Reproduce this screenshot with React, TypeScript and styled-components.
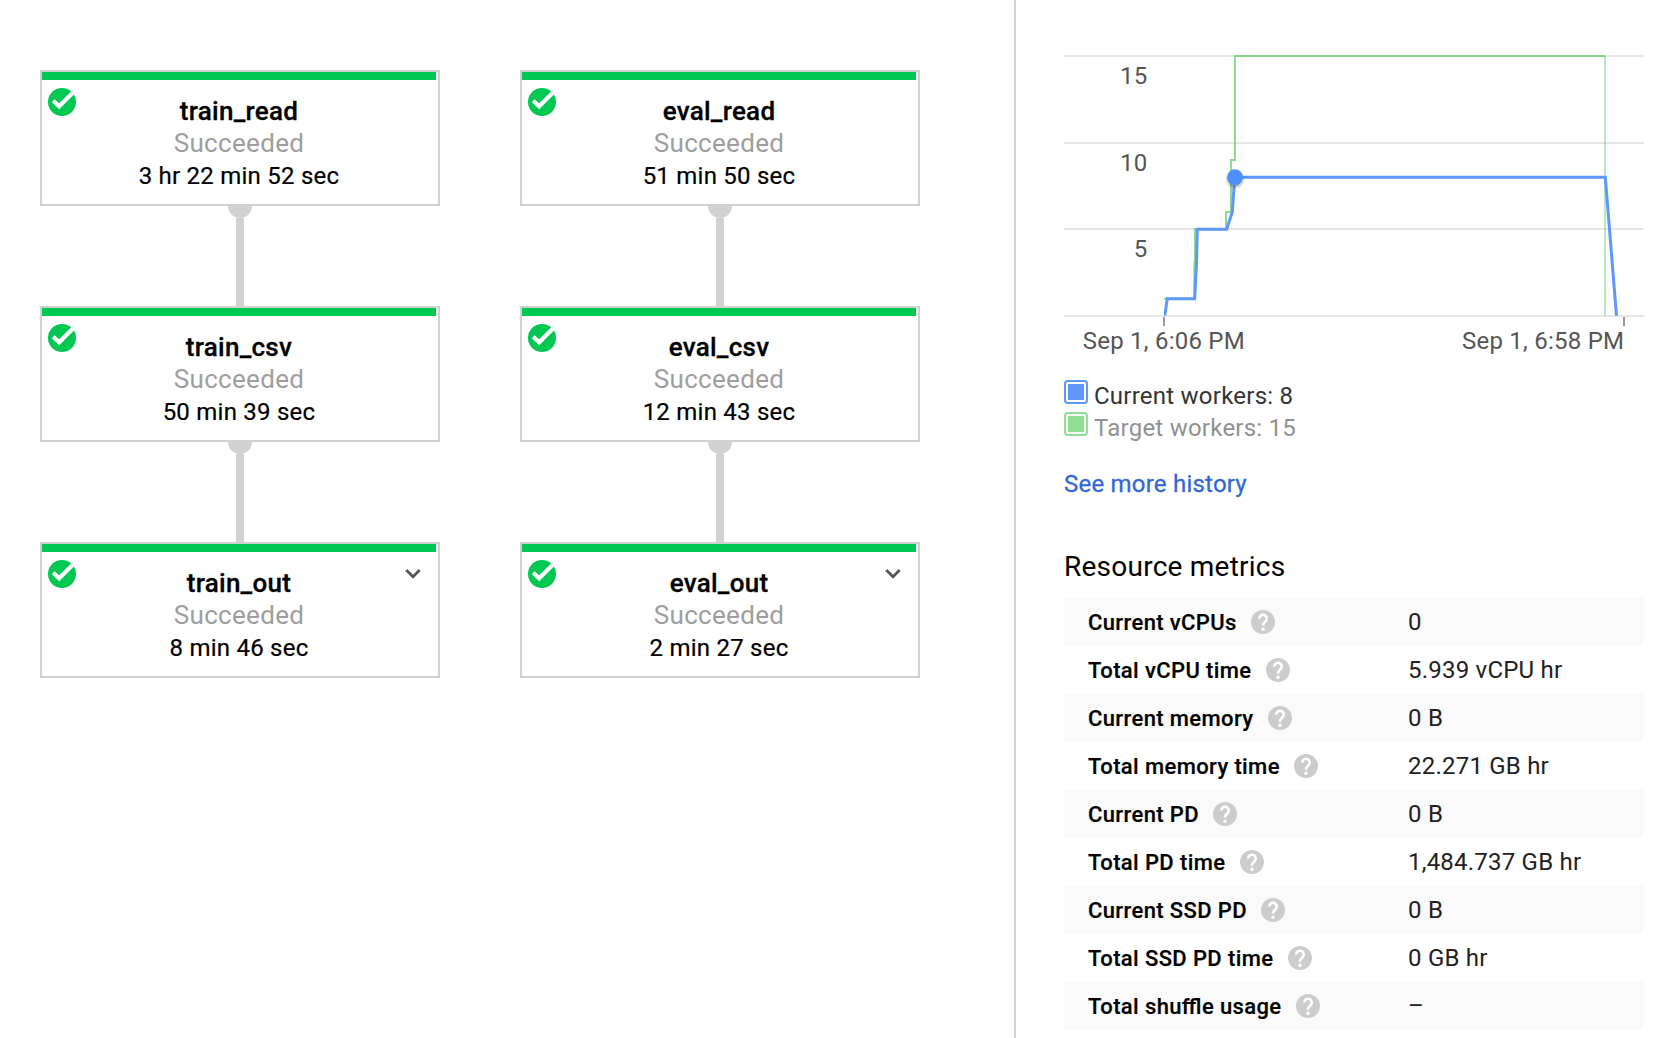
import React from 'react';
import styled, { createGlobalStyle } from 'styled-components';

const GlobalStyle = createGlobalStyle`
  * { box-sizing: border-box; }
  body {
    margin: 0;
    background: #fff;
    color: #000;
    font-family: Roboto, "Liberation Sans", sans-serif;
    overflow: hidden;
  }
`;

const Page = styled.main`
  display: grid;
  grid-template-columns: 1014px 1fr;
  height: 1038px;
  overflow: hidden;
`;

const Graph = styled.section`
  display: flex;
  align-items: flex-start;
  gap: 80px;
  padding: 70px 0 0 40px;
`;

const Pipeline = styled.div`
  display: flex;
  flex-direction: column;
  align-items: center;
  width: 400px;
`;

const Card = styled.article`
  width: 100%;
  height: 136px;
  border: 2px solid #d1d1d1;
  padding-right: 2px;
  background: #fff;
`;

const StatusBar = styled.div`
  height: 8px;
  background: #00c853;
`;

const CardBody = styled.div`
  display: grid;
  grid-template-columns: 1fr auto 1fr;
  align-items: start;
`;

const StatusIcon = styled.svg`
  width: 28px;
  height: 28px;
  margin: 8px 0 0 6px;
`;

const Chevron = styled.svg`
  justify-self: end;
  width: 18px;
  height: 12px;
  margin: 16px 14px 0 0;
`;

const CardText = styled.div`
  padding-top: 15px;
  text-align: center;
  white-space: nowrap;
`;

const StepName = styled.h3`
  margin: 0;
  font-size: 26px;
  line-height: 32px;
  font-weight: 500;
  letter-spacing: 0.26px;
  -webkit-text-stroke: 0.3px #000;
`;

const StepStatus = styled.div`
  font-size: 26px;
  line-height: 32px;
  letter-spacing: 0.32px;
  color: #9e9e9e;
`;

const StepTime = styled.div`
  font-size: 24px;
  line-height: 34px;
  letter-spacing: 0.24px;
  -webkit-text-stroke: 0.2px #000;
`;

const Connector = styled.div`
  display: flex;
  flex-direction: column;
  align-items: center;
  width: 24px;
  height: 100px;
`;

const Socket = styled.div`
  width: 24px;
  height: 12px;
  border-radius: 0 0 12px 12px;
  background: #d1d1d1;
`;

const Edge = styled.div`
  flex: 1;
  width: 8px;
  background: #d1d1d1;
`;

const Sidebar = styled.aside`
  display: flex;
  flex-direction: column;
  border-left: 2px solid #d1d1d1;
  padding: 40px 12px 0 48px;
`;

const Chart = styled.svg`
  display: block;
  width: 580px;
  height: 320px;
  font-size: 24px;
  letter-spacing: 0.24px;
  fill: #555;
`;

const Legend = styled.div`
  display: flex;
  flex-direction: column;
  padding-top: 20px;
`;

const LegendItem = styled.div<{ $color: string }>`
  display: flex;
  align-items: flex-start;
  gap: 6px;
  height: 32px;
  font-size: 24px;
  line-height: 32px;
  letter-spacing: 0.24px;
  color: ${(p) => p.$color};
`;

const Swatch = styled.span<{ $color: string }>`
  width: 24px;
  height: 24px;
  padding: 2px;
  border: 2px solid ${(p) => p.$color};
  border-radius: 4px;
  background: ${(p) => p.$color} content-box;
`;

const HistoryLink = styled.a`
  margin-top: 24px;
  font-size: 24px;
  line-height: 32px;
  letter-spacing: 0.22px;
  color: #3367d6;
  text-decoration: none;
  -webkit-text-stroke: 0.3px #3367d6;
`;

const SectionTitle = styled.h2`
  margin: 51px 0 15px;
  font-size: 28px;
  line-height: 32px;
  font-weight: 400;
  letter-spacing: 0.24px;
`;

const Metrics = styled.dl`
  margin: 0;
`;

const MetricRow = styled.div`
  display: grid;
  grid-template-columns: 320px 1fr;
  height: 48px;
  padding-left: 24px;
  line-height: 48px;
  white-space: nowrap;

  &:nth-child(odd) {
    background: #fafafa;
  }
`;

const MetricName = styled.dt`
  display: flex;
  align-items: center;
  gap: 14.5px;
  height: 48px;
  font-size: 22px;
  font-weight: 500;
  letter-spacing: 0.38px;
  font-feature-settings: "liga" 1;
  -webkit-text-stroke: 0.2px #000;
`;

const MetricLabel = styled.span`
  padding-top: 2px;
  line-height: 46px;
`;

const MetricValue = styled.dd`
  margin: 0;
  font-size: 24px;
  letter-spacing: 0.22px;
  color: #212121;
`;

const HelpIcon = styled.svg`
  width: 24px;
  height: 24px;
`;

type Step = { name: string; time: string; expandable?: boolean };

const pipelines: Step[][] = [
  [
    { name: 'train_read', time: '3 hr 22 min 52 sec' },
    { name: 'train_csv', time: '50 min 39 sec' },
    { name: 'train_out', time: '8 min 46 sec', expandable: true },
  ],
  [
    { name: 'eval_read', time: '51 min 50 sec' },
    { name: 'eval_csv', time: '12 min 43 sec' },
    { name: 'eval_out', time: '2 min 27 sec', expandable: true },
  ],
];

const metrics: [string, string][] = [
  ['Current vCPUs', '0'],
  ['Total vCPU time', '5.939 vCPU hr'],
  ['Current memory', '0 B'],
  ['Total memory time', '22.271 GB hr'],
  ['Current PD', '0 B'],
  ['Total PD time', '1,484.737 GB hr'],
  ['Current SSD PD', '0 B'],
  ['Total SSD PD time', '0 GB hr'],
  ['Total shuffle usage', '–'],
];

function StepCard({ step }: { step: Step }) {
  return (
    <Card>
      <StatusBar />
      <CardBody>
        <StatusIcon viewBox="0 0 28 28">
          <circle cx="14" cy="14" r="14" fill="#00c853" />
          <path d="M5.2 12.7 11.2 18.3 26 3.6" fill="none" stroke="#fff" strokeWidth="4.2" />
        </StatusIcon>
        <CardText>
          <StepName>{step.name}</StepName>
          <StepStatus>Succeeded</StepStatus>
          <StepTime>{step.time}</StepTime>
        </CardText>
        {step.expandable && (
          <Chevron viewBox="0 0 18 12">
            <path d="M2.3 2 9 8.8 15.7 2" fill="none" stroke="#555" strokeWidth="2.7" />
          </Chevron>
        )}
      </CardBody>
    </Card>
  );
}

function WorkersChart() {
  return (
    <Chart viewBox="1064 40 580 320">
      <defs>
        <filter id="dotShadow" x="-50%" y="-50%" width="200%" height="200%">
          <feDropShadow dx="0" dy="2" stdDeviation="1.5" floodOpacity="0.35" />
        </filter>
        <clipPath id="plot">
          <rect x="1164" y="50" width="480" height="265.7" />
        </clipPath>
      </defs>
      <path d="M1064 56H1644M1064 143H1644M1064 229H1644M1064 316H1644" stroke="#e6e6e6" strokeWidth="2" />
      <path d="M1164 317V326M1624 317V326" stroke="#999" strokeWidth="2" />
      <text x="1147.5" y="84" textAnchor="end">15</text>
      <text x="1147.5" y="171" textAnchor="end">10</text>
      <text x="1147.5" y="257" textAnchor="end">5</text>
      <text x="1082.7" y="349">Sep 1, 6:06 PM</text>
      <text x="1462" y="349">Sep 1, 6:58 PM</text>
      <g fill="none" clipPath="url(#plot)">
        <path
          d="M1164 298.7H1194.3V263H1195V229H1226V212H1231V160H1235V56H1605"
          stroke="#43cb4f"
          strokeOpacity="0.62"
          strokeWidth="2"
        />
        <path d="M1605 56V316" stroke="#43cb4f" strokeOpacity="0.5" strokeWidth="1.5" />
        <path
          d="M1164.7 316 1167.3 298.7H1194.7L1196.5 263 1197.3 229.3H1226.7L1232.3 212 1234.7 177.3H1605.3L1616.5 316"
          stroke="#5e97fe"
          strokeWidth="3"
        />
      </g>
      <circle cx="1235" cy="177.3" r="8" fill="#4d90fe" filter="url(#dotShadow)" />
    </Chart>
  );
}

export default function App() {
  return (
    <>
      <GlobalStyle />
      <Page>
        <Graph>
          {pipelines.map((steps) => (
            <Pipeline key={steps[0].name}>
              {steps.map((step, i) => (
                <React.Fragment key={step.name}>
                  {i > 0 && (
                    <Connector>
                      <Socket />
                      <Edge />
                    </Connector>
                  )}
                  <StepCard step={step} />
                </React.Fragment>
              ))}
            </Pipeline>
          ))}
        </Graph>
        <Sidebar>
          <WorkersChart />
          <Legend>
            <LegendItem $color="#333">
              <Swatch $color="#5e97fe" />
              Current workers: 8
            </LegendItem>
            <LegendItem $color="#919191">
              <Swatch $color="#8fe094" />
              Target workers: 15
            </LegendItem>
          </Legend>
          <HistoryLink href="#">See more history</HistoryLink>
          <SectionTitle>Resource metrics</SectionTitle>
          <Metrics>
            {metrics.map(([name, value]) => (
              <MetricRow key={name}>
                <MetricName>
                  <MetricLabel>{name}</MetricLabel>
                  <HelpIcon viewBox="2 2 20 20">
                    <circle cx="12" cy="12" r="10" fill="#ccc" />
                    <path
                      d="M8.9 9.2a3.1 3.1 0 1 1 5.3 2.1L13 12.5c-.7.7-1 1.4-1 2.7"
                      fill="none"
                      stroke="#fff"
                      strokeWidth="2.2"
                    />
                    <circle cx="12" cy="18" r="1.5" fill="#fff" />
                  </HelpIcon>
                </MetricName>
                <MetricValue>{value}</MetricValue>
              </MetricRow>
            ))}
          </Metrics>
        </Sidebar>
      </Page>
    </>
  );
}
